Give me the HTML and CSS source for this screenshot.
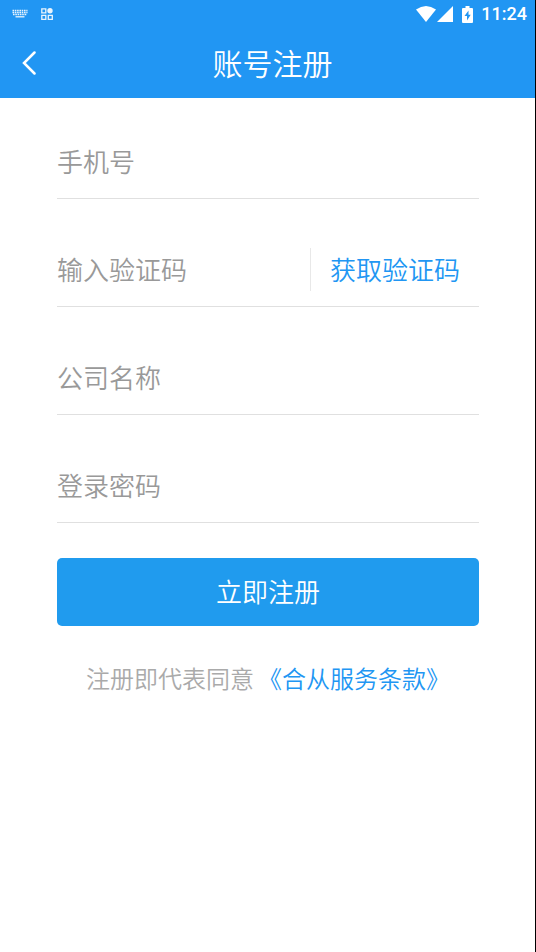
FILE: index.html
```html
<!DOCTYPE html>
<html lang="zh-CN">
<head>
<meta charset="utf-8">
<meta name="viewport" content="width=device-width, initial-scale=1">
<title>账号注册</title>
<link rel="stylesheet" href="styles.css">
</head>
<body>
<header class="top">
  <div class="status">
    <svg class="keyboard" width="16" height="10" viewBox="0 0 16 10" aria-hidden="true">
      <path d="M.5 1.500h15M.5 3.500h15M1 5.500h14" stroke-dasharray="1.600 .7"/>
      <path d="M3.500 7.800h9"/>
    </svg>
    <svg class="apps" width="12" height="12" viewBox="0 0 12 12" aria-hidden="true">
      <path d="M.8.8h4v4h-4zM.8 7.300h4v4h-4zM7.300 7.300h4v4h-4z"/>
      <circle cx="9" cy="2.800" r="2.700"/>
    </svg>
    <svg class="solid wifi" width="20" height="16" viewBox="0 0 20 16" aria-hidden="true">
      <path d="M0 3.500Q10-3.500 20 3.500L10 16z"/>
    </svg>
    <svg class="solid signal" width="16" height="16" viewBox="0 0 16 16" aria-hidden="true">
      <path d="M16 0v16H0z"/>
    </svg>
    <svg class="solid battery" width="11" height="17" viewBox="0 0 11 17" aria-hidden="true">
      <path fill-rule="evenodd" d="M3.500 0h4v2H10q1 0 1 1v13q0 1-1 1H1q-1 0-1-1V3q0-1 1-1h2.500zM6.500 4.500L2.500 10H5v4.500L8.700 8.700H6.500z"/>
    </svg>
    <time class="clock">11:24</time>
  </div>
  <div class="bar">
    <button class="back" type="button" aria-label="返回">
      <svg width="14" height="24" viewBox="0 0 14 24" aria-hidden="true"><path d="M12.500 1.500L2 12l10.500 10.500"/></svg>
    </button>
    <h1 class="title">账号注册</h1>
  </div>
</header>
<main class="main">
  <form class="form">
    <div class="field"><input class="input" type="tel" aria-label="手机号" placeholder="手机号"></div>
    <div class="field">
      <input class="input" type="text" aria-label="输入验证码" placeholder="输入验证码">
      <button class="code" type="button">获取验证码</button>
    </div>
    <div class="field"><input class="input" type="text" aria-label="公司名称" placeholder="公司名称"></div>
    <div class="field"><input class="input" type="password" aria-label="登录密码" placeholder="登录密码"></div>
    <button class="submit" type="submit">立即注册</button>
  </form>
  <p class="terms"><span>注册即代表同意</span><a class="link" href="#terms">《合从服务条款》</a></p>
</main>
</body>
</html>
```
FILE: styles.css
```css
* {
  box-sizing: border-box;
}

body {
  margin: 0;
  min-height: 100vh;
  border-right: 1px solid #000;
  background: #fff;
  font-family: "Noto Sans CJK SC", sans-serif;
  font-weight: 350;
}

button,
input {
  margin: 0;
  padding: 0;
  border: 0;
  background: none;
  font: inherit;
}

.top {
  background: #2196f3;
  color: #fff;
}

.status {
  display: flex;
  align-items: center;
  height: 28px;
  padding: 0 8px 0 12px;
}

.keyboard,
.apps {
  fill: none;
  stroke: #fff;
  stroke-width: 1.3;
  opacity: 0.9;
}

.apps {
  margin-left: 13px;
}

.apps circle {
  fill: #fff;
  stroke: none;
}

.solid {
  fill: #fff;
}

.wifi {
  margin-left: auto;
}

.signal {
  margin-left: 1px;
}

.battery {
  margin-left: 9px;
}

.clock {
  margin-left: 8px;
  font: 500 18px/28px Roboto, sans-serif;
}

.bar {
  display: grid;
  grid-template-columns: 58px 1fr 48px;
  align-items: center;
  height: 70px;
}

.back {
  display: flex;
  align-items: center;
  height: 70px;
  padding-left: 22px;
}

.back path {
  fill: none;
  stroke: #fff;
  stroke-width: 2.5;
  stroke-linecap: round;
}

.title {
  margin: 0;
  padding-bottom: 2px;
  font-size: 30px;
  font-weight: 350;
  line-height: 68px;
  text-align: center;
}

.main {
  padding: 28px 56px 0 57px;
}

.field {
  display: flex;
  align-items: center;
  height: 73px;
  margin-bottom: 35px;
  padding-bottom: 2px;
  border-bottom: 1px solid #e0e0e0;
}

.input {
  flex: 1;
  min-width: 0;
  height: 70px;
  padding-bottom: 2px;
  font-size: 26px;
  color: #333;
  outline: 0;
}

.input::placeholder {
  color: #999;
  opacity: 1;
}

.code {
  height: 43px;
  padding: 0 19px 2px;
  border-left: 1px solid #e8e8e8;
  color: #2196f3;
  font-size: 26px;
  line-height: 41px;
}

.submit {
  width: 100%;
  height: 68px;
  padding-bottom: 4px;
  border-radius: 5px;
  background: #209bee;
  color: #fff;
  font-size: 26px;
}

.terms {
  display: flex;
  justify-content: center;
  gap: 4px;
  margin: 34px 0 0;
  color: #aaa;
  font-size: 24px;
  line-height: 36px;
  white-space: nowrap;
}

.link {
  color: #2196f3;
  text-decoration: none;
}
```
